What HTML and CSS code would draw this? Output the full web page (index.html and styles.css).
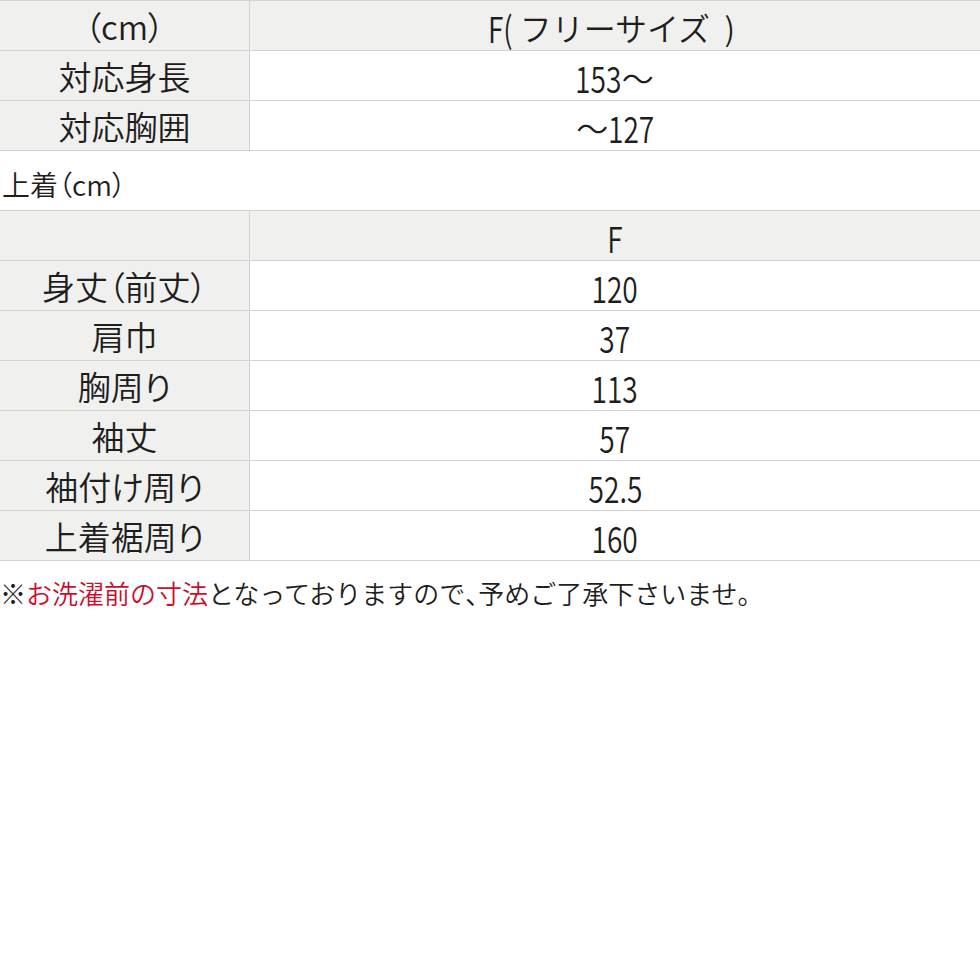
FILE: index.html
```html
<!DOCTYPE html>
<html lang="ja">
<head>
<meta charset="utf-8">
<link rel="stylesheet" href="styles.css">
</head>
<body>
<div class="sheet">
  <div class="size-table">
    <div class="row head">
      <div class="label">（cm）</div>
      <div class="value"><span class="num lead">F(</span> フリーサイズ  )</div>
    </div>
    <div class="row">
      <div class="label">対応身長</div>
      <div class="value"><span class="num lead">153</span>〜</div>
    </div>
    <div class="row">
      <div class="label">対応胸囲</div>
      <div class="value">〜<span class="num trail">127</span></div>
    </div>
  </div>

  <div class="caption">上着（cm）</div>

  <div class="size-table">
    <div class="row head">
      <div class="label"></div>
      <div class="value"><span class="num">F</span></div>
    </div>
    <div class="row">
      <div class="label">身丈（前丈）</div>
      <div class="value"><span class="num">120</span></div>
    </div>
    <div class="row">
      <div class="label">肩巾</div>
      <div class="value"><span class="num">37</span></div>
    </div>
    <div class="row">
      <div class="label">胸周り</div>
      <div class="value"><span class="num">113</span></div>
    </div>
    <div class="row">
      <div class="label">袖丈</div>
      <div class="value"><span class="num">57</span></div>
    </div>
    <div class="row">
      <div class="label">袖付け周り</div>
      <div class="value"><span class="num">52.5</span></div>
    </div>
    <div class="row">
      <div class="label">上着裾周り</div>
      <div class="value"><span class="num">160</span></div>
    </div>
  </div>

  <p class="note">※<span class="accent">お洗濯前の寸法</span>となっておりますので<span class="half">、</span>予めご了承下さいませ。</p>
</div>
</body>
</html>
```

FILE: styles.css
```css
html, body {
  margin: 0;
  padding: 0;
  background: #ffffff;
}

body {
  font-family: "Noto Sans CJK JP", sans-serif;
  font-weight: 350;
  color: #1e1e1e;
}

.sheet {
  width: 980px;
}

.size-table {
  border-top: 1px solid #d2d2d2;
}

.row {
  display: grid;
  grid-template-columns: 250px 1fr;
  height: 49px;
  border-bottom: 1px solid #d2d2d2;
}

.label,
.value {
  display: flex;
  align-items: center;
  justify-content: center;
  padding-top: 2px;
  box-sizing: border-box;
  line-height: 1;
  white-space: pre;
}

.label {
  background: #f0f0ee;
  border-right: 1px solid #d2d2d2;
  font-size: 33px;
  font-feature-settings: "palt";
}

.value {
  font-size: 32px;
}

.head .value {
  background: #f0f0ee;
}

.num {
  display: inline-block;
  font-size: 36px;
  font-weight: 350;
  transform: scaleX(0.78);
}

.num.lead {
  transform-origin: right center;
  margin-left: -14px;
}

.num.trail {
  transform-origin: left center;
  margin-right: -14px;
}

.caption {
  height: 59px;
  box-sizing: border-box;
  padding: 19px 0 0 2px;
  font-size: 28px;
  line-height: 1;
  font-feature-settings: "palt";
}

.note {
  margin: 16px 0 0 0;
  font-size: 26px;
  line-height: 1.2;
}

.half {
  font-feature-settings: "halt";
}

.accent {
  color: #c8102e;
}
```
